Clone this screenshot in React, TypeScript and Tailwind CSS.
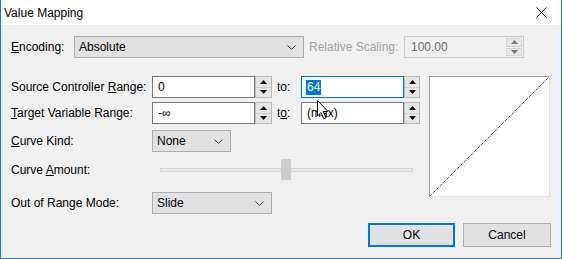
import React from "react";

const font = { fontFamily: '"Segoe UI", "Liberation Sans", Arial, sans-serif' };

function Chevron() {
  return (
    <svg width="9" height="5" viewBox="0 0 9 5" className="shrink-0">
      <polyline points="0.5,0.5 4.5,4.5 8.5,0.5" fill="none" stroke="#444" strokeWidth="1" />
    </svg>
  );
}

function Combo({ value, width }: { value: string; width: string }) {
  return (
    <div className={`${width} h-[22px] flex items-center justify-between pl-[4px] pr-[7px] bg-[#e1e1e1] border border-[#adadad]`}>
      <span>{value}</span>
      <Chevron />
    </div>
  );
}

function Arrow({ up, color = "#000" }: { up?: boolean; color?: string }) {
  return (
    <svg width="7" height="4" viewBox="0 0 7 4">
      {up ? <polygon points="0,4 7,4 3.5,0" fill={color} /> : <polygon points="0,0 7,0 3.5,4" fill={color} />}
    </svg>
  );
}

function Spin({ width, color }: { width: string; color?: string }) {
  return (
    <div className={`${width} h-[22px] flex flex-col border border-[#b9b9b9] bg-[#f0f0f0]`}>
      <div className="flex-1 flex items-center justify-center bg-[#e6e6e6] border-b border-[#cfcfcf]">
        <Arrow up color={color} />
      </div>
      <div className="flex-1 flex items-center justify-center bg-[#e6e6e6]">
        <Arrow color={color} />
      </div>
    </div>
  );
}

function SpinEdit({ children, focused }: { children: React.ReactNode; focused?: boolean }) {
  return (
    <div className="flex">
      <div className={`w-[103px] h-[22px] flex items-center pl-[5px] bg-white border ${focused ? "border-[#0078d7]" : "border-[#7a7a7a]"}`}>
        {children}
      </div>
    </div>
  );
}

export default function App() {
  return (
    <div className="relative w-[562px] h-[259px] bg-[#f0f0f0] border-x border-b border-[#1c7bd4] text-[12px] text-black overflow-hidden" style={font}>
      <div className="h-[25px] bg-white flex items-center justify-between pl-[3px] pr-[14px]">
        <span>Value Mapping</span>
        <svg width="11" height="11" viewBox="0 0 11 11">
          <path d="M0.5 0.5 L10.5 10.5 M10.5 0.5 L0.5 10.5" stroke="#000" strokeWidth="1" />
        </svg>
      </div>

      <div className="pt-[11px] px-[10px]">
        <div className="flex items-center h-[22px]">
          <span className="w-[63px]"><u>E</u>ncoding:</span>
          <Combo value="Absolute" width="w-[230px]" />
          <span className="w-[95px] ml-[5px] text-[#a3a3a3]">Relative Scaling:</span>
          <div className="w-[120px] h-[22px] flex items-center justify-between pl-[6px] pr-[1px] border border-[#cccccc] bg-[#f0f0f0]">
            <span className="text-[#6d6d6d]">100.00</span>
            <div className="w-[16px] h-[18px] flex flex-col gap-[1px]">
              <div className="flex-1 flex items-center justify-center bg-[#e6e6e6] border border-[#d4d4d4]">
                <Arrow up color="#777" />
              </div>
              <div className="flex-1 flex items-center justify-center bg-[#e6e6e6] border border-[#d4d4d4]">
                <Arrow color="#777" />
              </div>
            </div>
          </div>
        </div>

        <div className="flex mt-[18px] gap-[9px]">
          <div className="w-[409px] flex flex-col">
            <div className="flex items-center h-[22px]">
              <span className="w-[141px]">Source Controller <u>R</u>ange:</span>
              <SpinEdit>0</SpinEdit>
              <Spin width="w-[17px]" />
              <span className="w-[24px] ml-[5px]">to:</span>
              <SpinEdit focused>
                <span className="bg-[#0078d7] text-white leading-[15px] px-[1px] -ml-[1px]">64</span>
              </SpinEdit>
              <Spin width="w-[16px]" />
            </div>
            <div className="flex items-center h-[22px] mt-[4px]">
              <span className="w-[141px]"><u>T</u>arget Variable Range:</span>
              <SpinEdit>-∞</SpinEdit>
              <Spin width="w-[17px]" />
              <span className="w-[24px] ml-[5px]">t<u>o</u>:</span>
              <SpinEdit>(max)</SpinEdit>
              <Spin width="w-[16px]" />
            </div>
            <div className="flex items-center h-[22px] mt-[6px]">
              <span className="w-[141px]"><u>C</u>urve Kind:</span>
              <Combo value="None" width="w-[79px]" />
            </div>
            <div className="flex items-center h-[21px] mt-[7px]">
              <span className="w-[149px]">Curve <u>A</u>mount:</span>
              <div className="relative w-[253px] h-[21px] flex items-center">
                <div className="w-full h-[4px] bg-[#e7eaea] border border-[#d6d6d6]" />
                <div className="absolute left-[121px] top-0 w-[10px] h-[21px] bg-[#cdcdcd]" />
              </div>
            </div>
            <div className="flex items-center h-[22px] mt-[12px]">
              <span className="w-[141px]">Out of Range Mode:</span>
              <Combo value="Slide" width="w-[120px]" />
            </div>
          </div>

          <div className="w-[121px] h-[121px] bg-white border-t border-l border-[#a0a0a0] border-r border-b border-r-[#e3e3e3] border-b-[#e3e3e3]">
            <svg width="119" height="119" viewBox="0 0 119 119">
              <line x1="0" y1="119" x2="119" y2="0" stroke="#000" strokeWidth="1" strokeDasharray="1 1" />
            </svg>
          </div>
        </div>

        <div className="flex justify-end gap-[8px] mt-[9px]">
          <button className="w-[87px] h-[24px] bg-[#e1e1e1] border-2 border-[#0078d7]">OK</button>
          <button className="w-[88px] h-[24px] bg-[#e1e1e1] border border-[#adadad]">Cancel</button>
        </div>
      </div>

      <svg className="absolute left-[316px] top-[100px]" width="13" height="20" viewBox="0 0 13 20">
        <path d="M0.5 0.5 L0.5 16 L4 12.5 L6.8 18.8 L9 17.8 L6.3 11.5 L11 11.5 Z" fill="#fff" stroke="#000" strokeWidth="1" strokeLinejoin="round" />
      </svg>
    </div>
  );
}
